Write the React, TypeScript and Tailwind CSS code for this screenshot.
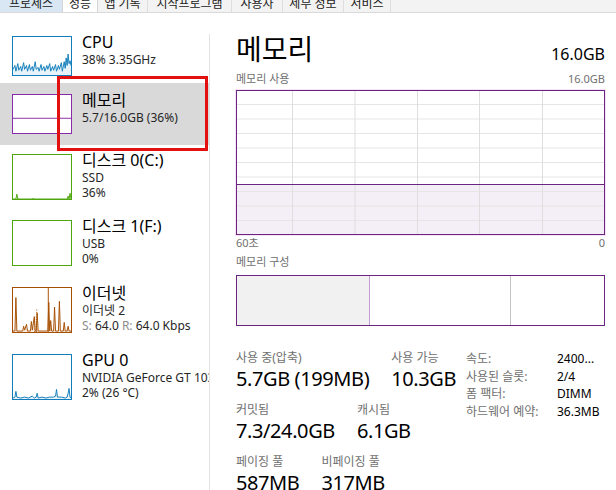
import React from "react";

const tabs = [
  { label: "프로세스", cls: "w-[62px] bg-[#d9e7f4]" },
  { label: "성능", cls: "w-[36px] bg-white border-x border-[#d5d5d5]" },
  { label: "앱 기록", cls: "w-[50px] border-r border-[#dedede]" },
  { label: "시작프로그램", cls: "w-[84px] border-r border-[#dedede]" },
  { label: "사용자", cls: "w-[51px] border-r border-[#dedede]" },
  { label: "세부 정보", cls: "w-[61px] border-r border-[#dedede]" },
  { label: "서비스", cls: "w-[47px] border-r border-[#dedede]" },
];

type Item = {
  title: string;
  lines: React.ReactNode[];
  box: string;
  thumbH: number;
  color: string;
  fill: string;
  points?: string;
  extra?: React.ReactNode;
};

const cpuPts =
  "0,34 2,30 3,36 5,28 6,35 8,31 9,36 11,27 12,34 14,30 15,36 17,29 18,35 20,31 21,36 23,26 24,34 26,32 27,36 29,29 30,35 32,31 33,36 35,30 36,34 38,28 39,36 41,31 42,35 44,29 45,36 47,30 48,34 50,27 51,36 53,26 54,33 55,22 56,30 57,18 58,28 59,25 60,30";

const items: Item[] = [
  {
    title: "CPU",
    lines: ["38% 3.35GHz"],
    box: "h-[58px] pt-[7px]",
    thumbH: 40,
    color: "#117dbb",
    fill: "#e8f2f9",
    points: cpuPts,
  },
  {
    title: "메모리",
    lines: ["5.7/16.0GB (36%)"],
    box: "h-[62px] pt-[7px] bg-[#d9d9d9]",
    thumbH: 40,
    color: "#8b2aa8",
    fill: "#ffffff",
    extra: <line x1="0" y1="24.5" x2="60" y2="24.5" stroke="#8b2aa8" strokeWidth="1" />,
  },
  {
    title: "디스크 0(C:)",
    lines: ["SSD", "36%"],
    box: "h-[67px] pt-[5px]",
    thumbH: 46,
    color: "#4da60c",
    fill: "#eef7e6",
    points: "0,46 3,46 4,41 5,46 20,46 21,45 22,46 40,46 56,46 57,43 58,46 59,40 60,46",
  },
  {
    title: "디스크 1(F:)",
    lines: ["USB", "0%"],
    box: "h-[66px] pt-[4px]",
    thumbH: 46,
    color: "#4da60c",
    fill: "#eef7e6",
  },
  {
    title: "이더넷",
    lines: [
      "이더넷 2",
      <span key="s">
        <span className="text-[#8c8c8c]">S: </span>64.0 <span className="text-[#8c8c8c]">R: </span>64.0 Kbps
      </span>,
    ],
    box: "h-[67px] pt-[5px]",
    thumbH: 46,
    color: "#a74f01",
    fill: "#f6ece4",
    points:
      "0,45 2,45 3,10 4,45 10,45 11,40 12,44 14,38 15,45 18,45 19,35 20,44 22,30 23,45 24,45 25,26 26,45 31,45 32,45 36,45 37,15 38,45 39,34 40,45 42,45 43,20 44,45 47,45 48,14 49,45 52,45 53,36 54,45 56,45 57,40 58,45 60,45",
    extra: (
      <>
        <line x1="36.5" y1="0" x2="36.5" y2="46" stroke="#a74f01" strokeWidth="1" />
        <line x1="22.5" y1="46" x2="22.5" y2="30" stroke="#a74f01" strokeWidth="1" strokeDasharray="1 1.5" />
        <line x1="24.5" y1="46" x2="24.5" y2="22" stroke="#a74f01" strokeWidth="1" strokeDasharray="1 1.5" />
      </>
    ),
  },
  {
    title: "GPU 0",
    lines: ["NVIDIA GeForce GT 1030", "2% (26 °C)"],
    box: "h-[67px] pt-[5px]",
    thumbH: 46,
    color: "#117dbb",
    fill: "#e8f2f9",
    points:
      "0,45 2,44 3,38 4,44 8,45 12,44 16,45 20,43 22,45 24,44 25,40 26,45 30,44 34,45 38,44 42,44 44,43 45,36 46,44 50,44 54,45 56,44 57,40 58,35 59,44 60,45",
  },
];

function Thumb({ it }: { it: Item }) {
  const h = it.thumbH;
  return (
    <div
      className="w-[60px] shrink-0 border bg-white mt-[4px]"
      style={{ height: h, borderColor: it.color }}
    >
      <svg width="58" height={h - 2} viewBox={`0 0 60 ${h}`} preserveAspectRatio="none" className="block">
        {it.points && (
          <>
            <polygon points={`0,${h} ${it.points} 60,${h}`} fill={it.fill} />
            <polyline points={it.points} fill="none" stroke={it.color} strokeWidth="1" />
          </>
        )}
        {it.extra}
      </svg>
    </div>
  );
}

function Stat({ label, value }: { label: string; value: string }) {
  return (
    <div className="whitespace-nowrap">
      <div className="text-[12px] leading-[16px] text-[#707070]">{label}</div>
      <div className="text-[20px] leading-[24px] tracking-[-0.4px] mt-[1px]">{value}</div>
    </div>
  );
}

const hLines = [13.5, 28, 42.5, 57, 71.5, 86, 100.5, 115, 129.5];
const vLines = [55.5, 118, 180.5, 242.5, 305.5];

export default function App() {
  return (
    <div className="w-[616px] h-[490px] overflow-hidden bg-white relative font-['Noto_Sans','Noto_Sans_CJK_KR',sans-serif] text-black">
      {/* tab strip, cut off at the top */}
      <div className="h-[13px] overflow-hidden bg-[#f3f3f3] border-b border-[#d9d9d9]">
        <div className="flex -mt-[4px]">
          {tabs.map((t) => (
            <div key={t.label} className={`${t.cls} text-center text-[12px] leading-[16px] h-[20px] text-[#1a1a1a]`}>
              {t.label}
            </div>
          ))}
        </div>
      </div>

      <div className="flex">
        {/* sidebar */}
        <div className="w-[209px] shrink-0 overflow-hidden pt-[12px]">
          {items.map((it) => (
            <div key={it.title} className={`${it.box} flex pl-[12px] gap-[10px]`}>
              <Thumb it={it} />
              <div className="whitespace-nowrap">
                <div className="text-[16px] leading-[20px]">{it.title}</div>
                {it.lines.map((l, i) => (
                  <div key={i} className="text-[12px] leading-[15px] text-[#262626]">
                    {l}
                  </div>
                ))}
              </div>
            </div>
          ))}
        </div>
        <div className="w-px bg-[#e3e3e3] mt-[21px] h-[456px]" />

        {/* main panel */}
        <div className="flex-1 pl-[26px] pr-[11px]">
          <div className="flex items-baseline justify-between mt-[18px]">
            <div className="text-[28px] leading-[36px]">메모리</div>
            <div className="text-[16px]">16.0GB</div>
          </div>
          <div className="flex justify-between text-[11px] leading-[14px] text-[#707070] mt-[5px]">
            <span>메모리 사용</span>
            <span>16.0GB</span>
          </div>
          <div className="mt-[4px] h-[145px] border border-[#6b2580] shadow-[0_0_0_1px_#f8e2fa]">
            <svg width="367" height="143" className="block">
              <rect x="0" y="93" width="367" height="50" fill="#f4eef6" />
              {hLines.map((y) => (
                <line key={y} x1="0" x2="367" y1={y} y2={y} stroke="#e6e6e6" strokeWidth="1" />
              ))}
              {vLines.map((x) => (
                <line key={x} x1={x} x2={x} y1="0" y2="143" stroke="#dedede" strokeWidth="1" />
              ))}
              <line x1="0" x2="367" y1="93.5" y2="93.5" stroke="#6b2580" strokeWidth="1" />
            </svg>
          </div>
          <div className="flex justify-between text-[11px] leading-[14px] text-[#707070] mt-[1px]">
            <span>60초</span>
            <span>0</span>
          </div>
          <div className="text-[11px] leading-[14px] text-[#707070] mt-[5px]">메모리 구성</div>
          <div className="mt-[6px] h-[51px] border border-[#6b2580] flex">
            <div className="w-[133px] bg-[#f1f1f1] border-r border-[#c79bd3]" />
            <div className="w-[141px] border-r border-[#c4c4c4]" />
            <div className="flex-1" />
          </div>

          {/* stats */}
          <div className="flex items-start mt-[24px]">
            <div className="w-[230px] shrink-0">
              <div className="flex gap-[22px]">
                <Stat label="사용 중(압축)" value="5.7GB (199MB)" />
                <Stat label="사용 가능" value="10.3GB" />
              </div>
              <div className="flex gap-[22px] mt-[11px]">
                <Stat label="커밋됨" value="7.3/24.0GB" />
                <Stat label="캐시됨" value="6.1GB" />
              </div>
              <div className="flex gap-[22px] mt-[11px]">
                <Stat label="페이징 풀" value="587MB" />
                <Stat label="비페이징 풀" value="317MB" />
              </div>
            </div>
            <div className="grid grid-cols-[91px_auto] content-start text-[12px] leading-[17.7px] whitespace-nowrap">
              <span className="text-[#707070]">속도:</span>
              <span>2400...</span>
              <span className="text-[#707070]">사용된 슬롯:</span>
              <span>2/4</span>
              <span className="text-[#707070]">폼 팩터:</span>
              <span>DIMM</span>
              <span className="text-[#707070]">하드웨어 예약:</span>
              <span>36.3MB</span>
            </div>
          </div>
        </div>
      </div>

      {/* red annotation box */}
      <div className="absolute left-[57px] top-[76px] w-[151px] h-[75px] border-[3px] border-[#e31010]" />
    </div>
  );
}
